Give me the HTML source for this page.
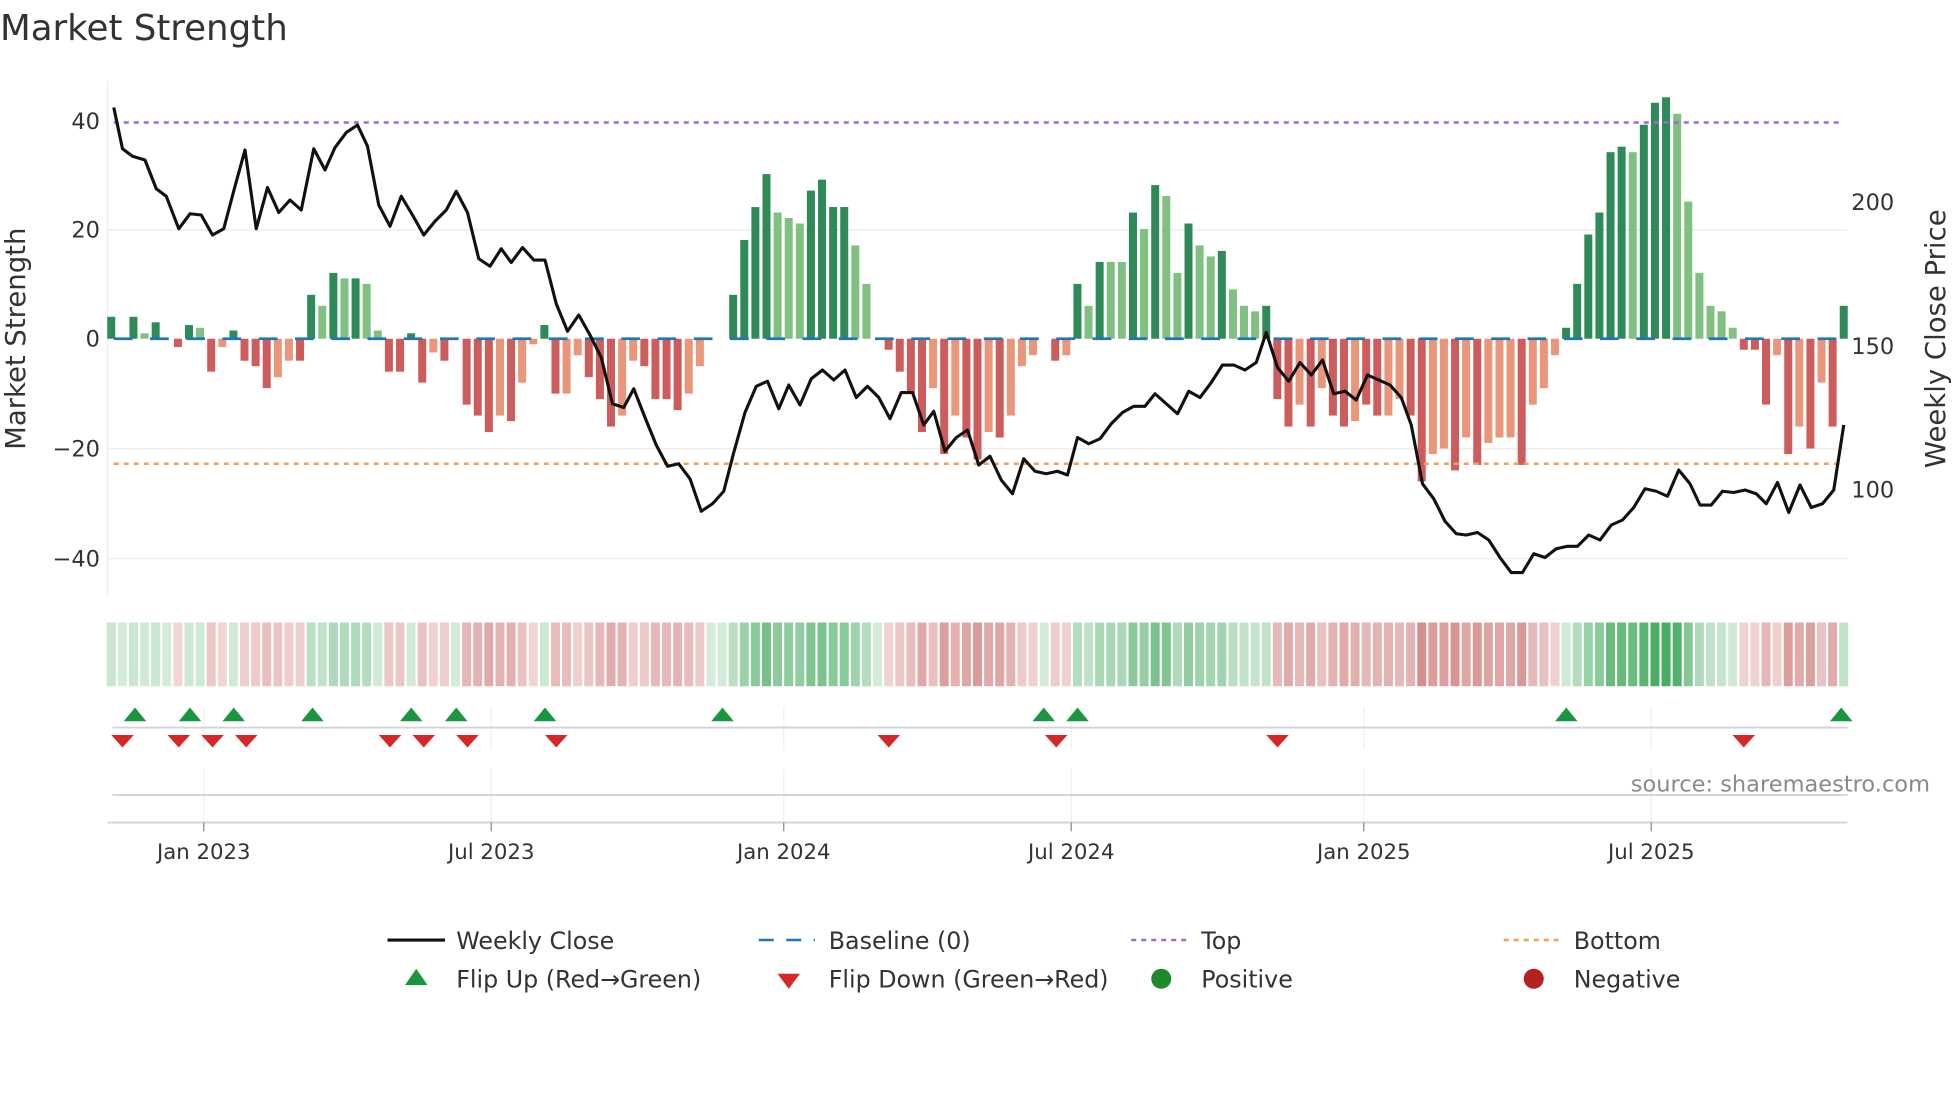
<!DOCTYPE html>
<html><head><meta charset="utf-8"><style>
html,body{margin:0;padding:0;background:#fff;width:1960px;height:1102px;overflow:hidden}
svg{display:block}
text{font-family:"DejaVu Sans","Liberation Sans",sans-serif;fill:#333}
</style></head><body>
<svg id="s" width="1960" height="1102" viewBox="0 0 1568 881.6" preserveAspectRatio="none" xmlns="http://www.w3.org/2000/svg">
<text x="0" y="32" font-size="28.5">Market Strength</text>
<g stroke="#ebebeb" stroke-width="1">
<line x1="86" y1="184" x2="1478" y2="184"/><line x1="86" y1="359" x2="1478" y2="359"/><line x1="86" y1="447" x2="1478" y2="447"/>
</g>
<line x1="86" y1="65" x2="86" y2="478" stroke="#eee"/>
<g font-size="18" text-anchor="end"><text x="80" y="103">40</text><text x="80" y="190">20</text><text x="80" y="277">0</text><text x="80" y="365">−20</text><text x="80" y="453">−40</text></g>
<g font-size="18"><text x="1481" y="168">200</text><text x="1481" y="283">150</text><text x="1481" y="398">100</text></g>
<text transform="translate(20,271) rotate(-90)" font-size="22" text-anchor="middle">Market Strength</text>
<text transform="translate(1556,271) rotate(-90)" font-size="22" text-anchor="middle">Weekly Close Price</text>
<g id="bars"></g>
<line x1="91" y1="98" x2="1475" y2="98" stroke="#9b6bd6" stroke-width="2" stroke-dasharray="4,4"/>
<line x1="91" y1="371" x2="1475" y2="371" stroke="#f2a05a" stroke-width="2" stroke-dasharray="4,4"/>
<polyline id="ln" fill="none" stroke="#111" stroke-width="2.5" stroke-linejoin="round"/>
<g id="heat"></g>
<g stroke="#eef0f3" stroke-width="1">
<line x1="163" y1="565" x2="163" y2="600"/><line x1="393" y1="565" x2="393" y2="600"/><line x1="627" y1="565" x2="627" y2="600"/><line x1="857" y1="565" x2="857" y2="600"/><line x1="1091" y1="565" x2="1091" y2="600"/><line x1="1321" y1="565" x2="1321" y2="600"/>
<line x1="163" y1="615" x2="163" y2="658"/><line x1="393" y1="615" x2="393" y2="658"/><line x1="627" y1="615" x2="627" y2="658"/><line x1="857" y1="615" x2="857" y2="658"/><line x1="1091" y1="615" x2="1091" y2="658"/><line x1="1321" y1="615" x2="1321" y2="658"/>
</g>
<line x1="90" y1="582" x2="1478" y2="582" stroke="#d0d3d8" stroke-width="1.5"/>
<line x1="90" y1="636" x2="1478" y2="636" stroke="#d0d3d8" stroke-width="1.5"/>
<line x1="86" y1="658" x2="1478" y2="658" stroke="#d0d3d8" stroke-width="1.5"/>
<g stroke="#888"><line x1="163" y1="658" x2="163" y2="665"/><line x1="393" y1="658" x2="393" y2="665"/><line x1="627" y1="658" x2="627" y2="665"/><line x1="857" y1="658" x2="857" y2="665"/><line x1="1091" y1="658" x2="1091" y2="665"/><line x1="1321" y1="658" x2="1321" y2="665"/></g>
<g id="mk"></g>
<g font-size="17" text-anchor="middle"><text x="163" y="687">Jan 2023</text><text x="393" y="687">Jul 2023</text><text x="627" y="687">Jan 2024</text><text x="857" y="687">Jul 2024</text><text x="1091" y="687">Jan 2025</text><text x="1321" y="687">Jul 2025</text></g>
<text x="1544" y="633" font-size="18" text-anchor="end" style="fill:#8a8a8a">source: sharemaestro.com</text>
<g font-size="19">
<line x1="310" y1="752" x2="356" y2="752" stroke="#111" stroke-width="2.5"/><text x="365" y="759">Weekly Close</text>
<line x1="607" y1="752" x2="652" y2="752" stroke="#1f77b4" stroke-width="2" stroke-dasharray="12,10"/><text x="663" y="759">Baseline (0)</text>
<line x1="905" y1="752" x2="950" y2="752" stroke="#9b6bd6" stroke-width="2" stroke-dasharray="4,4"/><text x="961" y="759">Top</text>
<line x1="1203" y1="752" x2="1248" y2="752" stroke="#f2a05a" stroke-width="2" stroke-dasharray="4,4"/><text x="1259" y="759">Bottom</text>
<polygon points="324,788 342,788 333,775" fill="#1a9641"/><text x="365" y="790">Flip Up (Red→Green)</text>
<polygon points="622,779 640,779 631,791" fill="#d62728"/><text x="663" y="790">Flip Down (Green→Red)</text>
<circle cx="929" cy="783" r="8" fill="#1f8a2a"/><text x="961" y="790">Positive</text>
<circle cx="1227" cy="783" r="8" fill="#b22222"/><text x="1259" y="790">Negative</text>
</g>
</svg>
<script>
var NS="http://www.w3.org/2000/svg";
function el(p,t,a){var e=document.createElementNS(NS,t);for(var k in a)e.setAttribute(k,a[k]);p.appendChild(e);return e;}
var B="D4 Z0 D4 L1 D3 Z0 R-1.5 D2.5 L2 R-6 O-1.5 D1.5 R-4 R-5 R-9 O-7 O-4 R-4 D8 L6 D12 L11 D11 L10 L1.5 R-6 R-6 D1 R-8 O-2.5 R-4 Z0 R-12 R-14 R-17 O-14 R-15 O-8 O-1 D2.5 R-10 O-10 O-3 R-7 R-11 R-16 O-14 O-4 R-5 R-11 R-11 R-13 O-10 O-5 Z0 Z0 D8 D18 D24 D30 L23 L22 L21 D27 D29 D24 D24 L17 L10 Z0 R-2 R-6 R-10 R-17 O-9 R-21 O-14 R-18 R-22 O-17 R-18 O-14 O-5 O-3 Z0 R-4 O-3 D10 L6 D14 L14 L14 D23 L20 D28 L26 L12 D21 L17 L15 D16 L9 L6 L5 D6 R-11 R-16 O-12 R-16 O-9 R-14 R-16 O-15 R-12 R-14 O-14 O-11 R-14 R-26 O-21 O-20 R-24 O-18 R-23 O-19 O-18 O-18 R-23 O-12 O-9 O-3 D2 D10 D19 D23 D34 D35 L34 D39 D43 D44 L41 L25 L12 L6 L5 L2 R-2 R-2 R-12 O-3 R-21 O-16 R-20 O-8 R-16 D6".split(" ");
var n=B.length, x0=89, x1=1475, st=(x1-x0)/(n-1);
var col={D:"#2e8b57",L:"#80c080",R:"#cd5c5c",O:"#e9967a"};
var g=document.getElementById("bars"),h=document.getElementById("heat");
for(var i=0;i<n;i++){var t=B[i][0],v=parseFloat(B[i].slice(1)),x=x0+i*st;
 if(t!="Z"){var y=271-v*4.39;el(g,"rect",{x:x-3.2,y:Math.min(y,271),width:6.4,height:Math.abs(v*4.39),fill:col[t]});}
 var a=Math.min(1,0.22+Math.abs(v)/50*0.8),c=v>=0?"58,166,85":"192,80,77";if(v==0)a=0.22;
 el(h,"rect",{x:x-3.6,y:498,width:7.2,height:51,fill:"rgba("+c+","+a.toFixed(2)+")"});}
for(var x=91;x<1475;x+=29)el(g,"line",{x1:x,y1:271,x2:x+15,y2:271,stroke:"#1f77b4","stroke-width":2.2});
var P=[91,86,98,119,106,125,116,128,125,151,133,157,143,183,152,171,161,172,170,188,179,183,188,149,196,120,205,183,214,150,223,170,232,160,241,168,251,119,260,136,268,118,277,106,286,100,294,117,303,164,312,181,321,157,330,172,339,188,348,177,357,168,365,153,374,170,383,207,392,213,401,199,409,210,418,198,427,208,436,208,445,243,454,265,463,252,472,268,481,286,490,323,499,326,507,311,516,334,525,356,534,373,543,371,552,383,561,409,570,403,579,393,587,362,596,330,605,309,614,305,623,327,631,308,640,324,649,303,658,296,667,304,676,296,685,318,694,309,703,318,712,335,721,314,730,314,739,340,747,329,756,361,765,350,774,344,783,372,792,365,801,384,810,395,819,367,828,377,837,379,846,377,854,380,862,350,871,355,880,351,889,339,898,330,907,325,916,325,924,315,933,323,942,331,951,313,960,318,969,306,978,292,987,292,996,296,1005,290,1013,266,1022,294,1031,305,1040,290,1049,300,1058,288,1067,315,1076,313,1085,320,1094,300,1103,304,1112,308,1121,318,1129,340,1138,387,1147,399,1156,417,1165,427,1173,428,1182,426,1191,432,1200,446,1209,458,1218,458,1227,443,1236,446,1245,439,1254,437,1262,437,1271,428,1280,432,1289,420,1298,416,1307,406,1316,391,1325,393,1334,397,1343,376,1352,387,1360,404,1369,404,1378,393,1387,394,1396,392,1405,395,1413,403,1422,386,1431,410,1440,388,1449,406,1458,403,1467,392,1475,340];
var s="";for(var i=0;i<P.length;i+=2)s+=P[i]+","+P[i+1]+" ";document.getElementById("ln").setAttribute("points",s);
var m=document.getElementById("mk");
[108,152,187,250,329,365,436,578,835,862,1253,1473].forEach(function(x){el(m,"polygon",{points:(x-9)+",577 "+(x+9)+",577 "+x+",566",fill:"#1a9641"});});
[98,143,170,197,312,339,374,445,711,845,1022,1395].forEach(function(x){el(m,"polygon",{points:(x-9)+",588 "+(x+9)+",588 "+x+",598",fill:"#d62728"});});
</script>
</body></html>
